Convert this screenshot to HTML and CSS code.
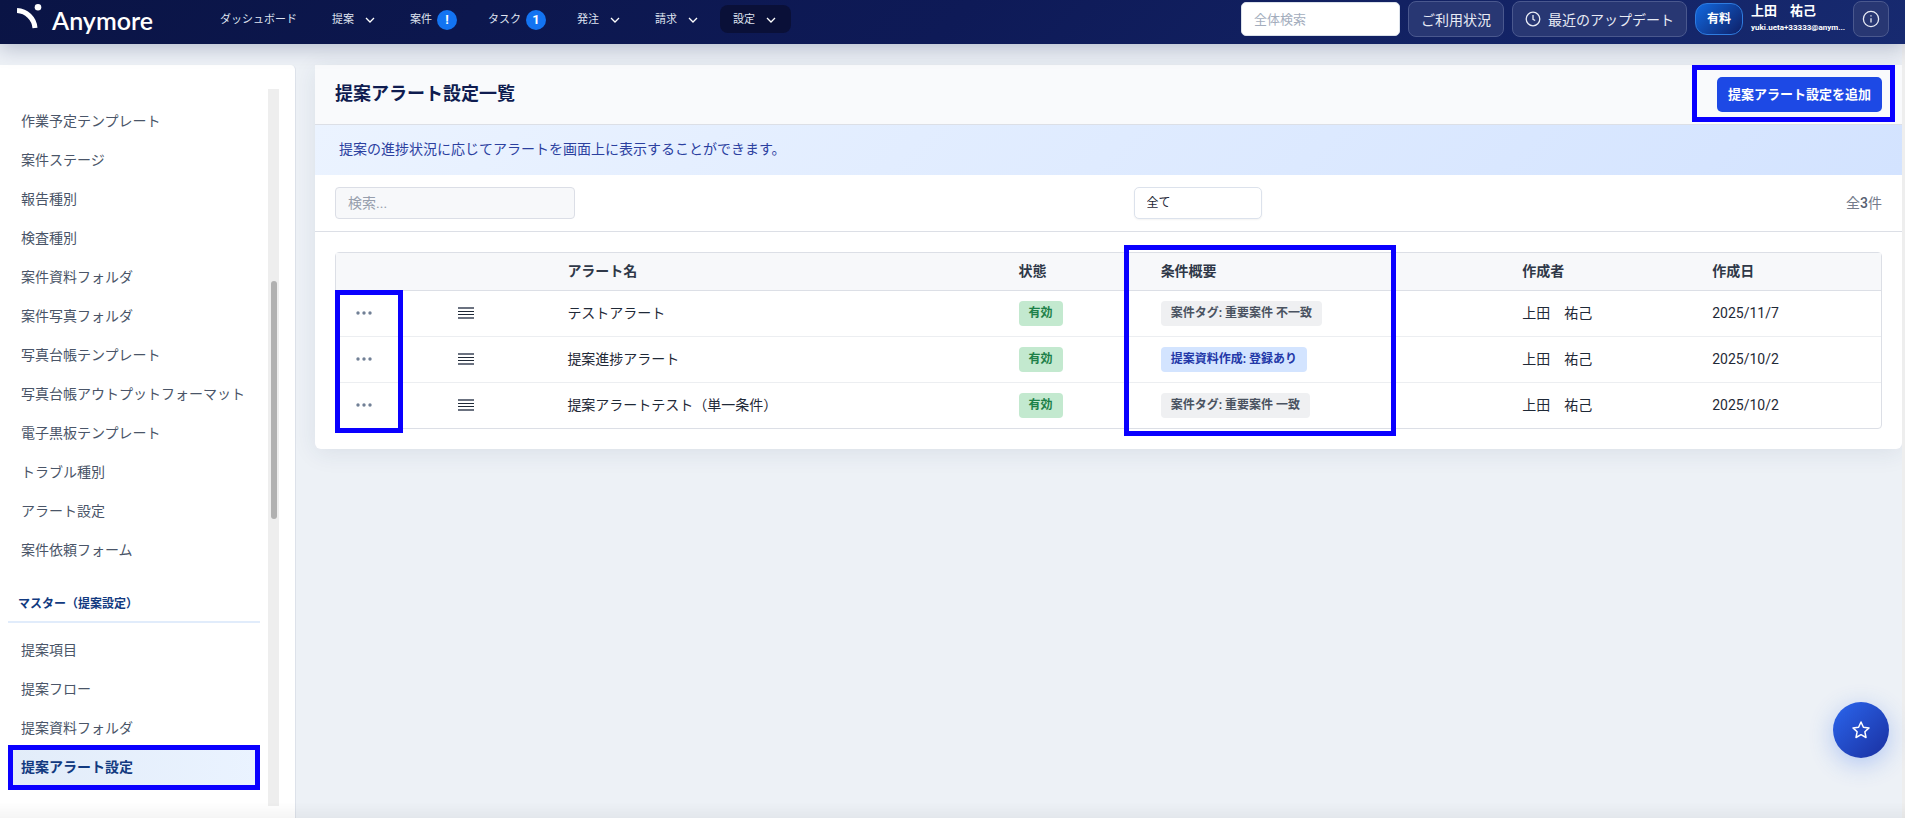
FILE: index.html
```html
<!DOCTYPE html>
<html lang="ja">
<head>
  <meta charset="UTF-8" />
  <meta name="viewport" content="width=device-width, initial-scale=1.0"/>
  <title>提案アラート設定一覧 - Anymore</title>
  <link rel="stylesheet" href="styles.css">
</head>
<body>

  <header class="topbar">
    <a href="#" class="logo">
      <svg width="26" height="26" viewBox="0 0 26 26" aria-hidden="true">
        <path d="M0 6.5A19 19 0 0 1 18 24" fill="none" stroke="#fff" stroke-width="5"/>
        <circle cx="21" cy="3.300" r="3.3" fill="#fff"/>
      </svg>
      <span>Anymore</span>
    </a>

    <nav class="nav">
      <a href="#">ダッシュボード</a>
      <a href="#">提案 <svg class="chevron" viewBox="0 0 10 6"><path d="M1 1l4 4 4-4"/></svg></a>
      <a href="#" class="has-badge">案件 <span class="nav-badge">!</span></a>
      <a href="#" class="has-badge">タスク <span class="nav-badge">1</span></a>
      <a href="#">発注 <svg class="chevron" viewBox="0 0 10 6"><path d="M1 1l4 4 4-4"/></svg></a>
      <a href="#">請求 <svg class="chevron" viewBox="0 0 10 6"><path d="M1 1l4 4 4-4"/></svg></a>
      <a href="#" class="active">設定 <svg class="chevron" viewBox="0 0 10 6"><path d="M1 1l4 4 4-4"/></svg></a>
    </nav>

    <div class="tools">
      <input type="text" class="global-search" placeholder="全体検索" aria-label="全体検索">
      <button class="tool-btn">ご利用状況</button>
      <button class="tool-btn">
        <svg width="16" height="16" viewBox="0 0 16 16" aria-hidden="true">
          <circle cx="8" cy="8" r="6.8"/><path d="M8 4v4.3l2.2 1.2"/>
        </svg>
        最近のアップデート
      </button>
      <span class="plan">有料</span>
      <div class="user">
        <div class="user-name">上田　祐己</div>
        <div class="user-mail">yuki.ueta+33333@anym...</div>
      </div>
      <button class="tool-btn info" aria-label="情報">
        <svg width="18" height="18" viewBox="0 0 18 18" aria-hidden="true">
          <circle cx="9" cy="9" r="7.6"/><path d="M9 8.2v4.4M9 5.2v1.4"/>
        </svg>
      </button>
    </div>
  </header>

  <div class="layout">
    <aside class="sidebar">
      <div class="menu">
        <ul>
          <li><a href="#">作業予定テンプレート</a></li>
          <li><a href="#">案件ステージ</a></li>
          <li><a href="#">報告種別</a></li>
          <li><a href="#">検査種別</a></li>
          <li><a href="#">案件資料フォルダ</a></li>
          <li><a href="#">案件写真フォルダ</a></li>
          <li><a href="#">写真台帳テンプレート</a></li>
          <li><a href="#">写真台帳アウトプットフォーマット</a></li>
          <li><a href="#">電子黒板テンプレート</a></li>
          <li><a href="#">トラブル種別</a></li>
          <li><a href="#">アラート設定</a></li>
          <li><a href="#">案件依頼フォーム</a></li>
        </ul>
        <h2>マスター（提案設定）</h2>
        <ul>
          <li><a href="#">提案項目</a></li>
          <li><a href="#">提案フロー</a></li>
          <li><a href="#">提案資料フォルダ</a></li>
          <li class="current"><a href="#">提案アラート設定</a><span class="mark mark-menu"></span></li>
        </ul>
      </div>
      <div class="scroll-track"><div class="scroll-thumb"></div></div>
    </aside>

    <main class="panel">
      <div class="panel-head">
        <h1>提案アラート設定一覧</h1>
        <div class="add-wrap">
          <button class="add-btn">提案アラート設定を追加</button>
          <span class="mark mark-add"></span>
        </div>
      </div>

      <p class="notice">提案の進捗状況に応じてアラートを画面上に表示することができます。</p>

      <div class="filters">
        <input type="text" class="search" placeholder="検索..." aria-label="検索">
        <select class="status" aria-label="状態">
          <option>全て</option>
        </select>
        <span class="count">全<b>3</b>件</span>
      </div>

      <div class="table-wrap">
        <table>
          <colgroup>
            <col class="col-menu"><col class="col-drag"><col class="col-name"><col class="col-state">
            <col class="col-cond"><col class="col-author"><col class="col-date">
          </colgroup>
          <thead>
            <tr>
              <th></th><th></th><th>アラート名</th><th>状態</th><th>条件概要</th><th>作成者</th><th>作成日</th>
            </tr>
          </thead>
          <tbody>
            <tr>
              <td><button class="more" aria-label="メニュー"><svg width="16" height="4" viewBox="0 0 16 4"><circle cx="2" cy="2" r="1.7"/><circle cx="8" cy="2" r="1.7"/><circle cx="14" cy="2" r="1.7"/></svg></button></td>
              <td><svg class="drag" width="16" height="12" viewBox="0 0 16 12"><path class="outer" d="M0 0h16v2H0zM0 10h16v2H0z"/><path d="M0 4h16v1H0zM0 7h16v1H0z"/></svg></td>
              <td>テストアラート</td>
              <td><span class="tag tag-green">有効</span></td>
              <td><span class="tag">案件タグ: 重要案件 不一致</span></td>
              <td>上田　祐己</td>
              <td>2025/11/7</td>
            </tr>
            <tr>
              <td><button class="more" aria-label="メニュー"><svg width="16" height="4" viewBox="0 0 16 4"><circle cx="2" cy="2" r="1.7"/><circle cx="8" cy="2" r="1.7"/><circle cx="14" cy="2" r="1.7"/></svg></button></td>
              <td><svg class="drag" width="16" height="12" viewBox="0 0 16 12"><path class="outer" d="M0 0h16v2H0zM0 10h16v2H0z"/><path d="M0 4h16v1H0zM0 7h16v1H0z"/></svg></td>
              <td>提案進捗アラート</td>
              <td><span class="tag tag-green">有効</span></td>
              <td><span class="tag tag-blue">提案資料作成: 登録あり</span></td>
              <td>上田　祐己</td>
              <td>2025/10/2</td>
            </tr>
            <tr>
              <td><button class="more" aria-label="メニュー"><svg width="16" height="4" viewBox="0 0 16 4"><circle cx="2" cy="2" r="1.7"/><circle cx="8" cy="2" r="1.7"/><circle cx="14" cy="2" r="1.7"/></svg></button></td>
              <td><svg class="drag" width="16" height="12" viewBox="0 0 16 12"><path class="outer" d="M0 0h16v2H0zM0 10h16v2H0z"/><path d="M0 4h16v1H0zM0 7h16v1H0z"/></svg></td>
              <td>提案アラートテスト（単一条件）</td>
              <td><span class="tag tag-green">有効</span></td>
              <td><span class="tag">案件タグ: 重要案件 一致</span></td>
              <td>上田　祐己</td>
              <td>2025/10/2</td>
            </tr>
          </tbody>
        </table>
        <span class="mark mark-more"></span>
        <span class="mark mark-cond"></span>
      </div>
    </main>
    <div class="page-scroll"></div>
  </div>

  <button class="fab" aria-label="お気に入り">
    <svg width="20" height="20" viewBox="0 0 20 20" aria-hidden="true">
      <path d="M10 2l2.4 5.2 5.6.7-4.1 3.9 1.1 5.7-5-2.8-5 2.8 1.100-5.700L2 7.900l5.600-.7z"/>
    </svg>
  </button>
  <div class="bottom-fade"></div>

</body>
</html>
```
FILE: styles.css
```css
* {
  box-sizing: border-box;
}

body {
  font-family: Roboto, "Noto Sans CJK JP", sans-serif;
  font-size: 14px;
  line-height: 20px;
  margin: 0;
  height: 100vh;
  overflow: hidden;
  display: flex;
  flex-direction: column;
  background: #edf1f6;
  color: #1f2937;
}

a {
  text-decoration: none;
}

button,
input,
select {
  font-family: inherit;
}

button {
  cursor: pointer;
}

/* Header */
.topbar {
  position: relative;
  z-index: 2;
  flex: none;
  height: 44px;
  padding: 0 16px 0 17px;
  display: flex;
  background: linear-gradient(135deg, #0a1445, #0e1a57 50%, #172a70);
  box-shadow: 0 4px 20px rgba(10, 25, 80, 0.25);
}

.logo {
  display: flex;
  gap: 9px;
  padding-top: 4px;
  width: 190px;
  color: white;
  font-family: Lato, sans-serif;
  font-size: 25px;
  font-weight: 600;
  line-height: 32px;
}

.nav {
  display: flex;
  align-items: center;
  gap: 7px;
  height: 28px;
  margin-top: 5px;
}

.nav a {
  display: flex;
  align-items: center;
  gap: 11px;
  height: 28px;
  padding: 2px 15px 0 13px;
  border-radius: 8px;
  color: #dfe3f0;
  font-size: 11px;
}

.nav .active {
  background: #0a1038;
}

.nav .has-badge {
  gap: 5px;
  padding-right: 11px;
}

.chevron {
  width: 10px;
  height: 6px;
  fill: none;
  stroke: white;
  stroke-width: 1.3;
}

.nav-badge {
  width: 20px;
  height: 20px;
  border-radius: 50%;
  background: #1374f2;
  color: white;
  font-size: 13px;
  font-weight: bold;
  text-align: center;
}

.tools {
  display: flex;
  align-items: center;
  gap: 8px;
  height: 36px;
  margin: 1px 0 0 auto;
}

.global-search {
  width: 159px;
  height: 34px;
  padding: 0 12px;
  border: 1px solid #dbe1ea;
  border-radius: 5px;
  background: white;
  font-size: 13px;
}

.global-search::placeholder {
  color: #a3adbd;
}

.tool-btn {
  display: flex;
  align-items: center;
  gap: 7px;
  height: 36px;
  padding: 0 12px;
  border: 1px solid #4a588e;
  border-radius: 8px;
  background: #283773;
  color: #e8ebf5;
  font-size: 14px;
}

.tool-btn svg {
  fill: none;
  stroke: #e8ebf5;
  stroke-width: 1.3;
}

.tool-btn.info {
  padding: 0 8px;
}

.plan {
  height: 32px;
  padding: 0 11px;
  border: 1px solid #2f7ce0;
  border-radius: 12px;
  background: linear-gradient(135deg, #1269e0, #0e1f66);
  color: white;
  font-size: 12px;
  font-weight: bold;
  line-height: 30px;
}

.user {
  width: 94px;
  color: white;
  font-weight: bold;
  white-space: nowrap;
}

.user-name {
  font-size: 13px;
  line-height: 18px;
}

.user-mail {
  font-size: 8px;
  line-height: 16px;
}

/* Layout */
.layout {
  flex: 1;
  min-height: 0;
  display: flex;
}

.sidebar {
  width: 296px;
  margin-top: 21px;
  padding: 24px 16px 12px 8px;
  display: flex;
  justify-content: space-between;
  background: white;
  border-right: 1px solid #dde2ea;
  border-top-right-radius: 5px;
}

.menu {
  width: 252px;
  padding-top: 13px;
}

.menu ul {
  list-style: none;
  margin: 0;
  padding: 0;
}

.menu li {
  position: relative;
}

.menu li a {
  display: block;
  padding: 0 13px;
  color: #4a5568;
  line-height: 39px;
}

.menu .current a {
  background: linear-gradient(90deg, #e2ecf9, #eaf3ff);
  color: #123a80;
  font-weight: bold;
}

.menu h2 {
  margin: 22px 0 8px;
  padding: 0 10px 5px;
  border-bottom: 2px solid #e1ecfb;
  color: #123a80;
  font-size: 12px;
  line-height: 24px;
}

.scroll-track {
  width: 11px;
  padding: 192px 2px 0 3px;
  background: #eeeeee;
}

.scroll-thumb {
  height: 238px;
  border-radius: 3px;
  background: #b1b1b1;
}

.panel {
  flex: 1;
  align-self: flex-start;
  margin: 21px 0 0 19px;
  background: white;
  border-radius: 0 0 6px 6px;
  box-shadow: 0 4px 24px rgba(30, 50, 90, 0.09);
}

.panel-head {
  display: flex;
  justify-content: space-between;
  align-items: center;
  height: 60px;
  padding: 0 20px;
  background: #f9fafc;
  border-bottom: 1px solid #dcdfe6;
}

.panel-head h1 {
  margin: 0 0 2px;
  color: #0f1c50;
  font-size: 18px;
  line-height: 24px;
}

.add-wrap {
  position: relative;
}

.add-btn {
  display: block;
  height: 35px;
  padding: 0 11px 2px;
  border: none;
  border-radius: 5px;
  background: #1d49e5;
  color: white;
  font-size: 13px;
  font-weight: bold;
}

.notice {
  margin: 0;
  padding: 14px 24px 16px;
  background: linear-gradient(135deg, #ebf3ff, #d3e3ff);
  color: #2b409f;
}

.filters {
  display: flex;
  justify-content: space-between;
  align-items: center;
  padding: 12px 20px;
  border-bottom: 1px solid #dcdfe6;
}

.search {
  width: 240px;
  height: 32px;
  padding: 0 12px;
  border: 1px solid #dbdee6;
  border-radius: 4px;
  background: #f7f8fa;
  font-size: 14px;
}

.search::placeholder {
  color: #969eac;
}

.status {
  appearance: none;
  width: 128px;
  height: 32px;
  margin-right: 26px;
  padding: 0 12px;
  border: 1px solid #dce2ec;
  border-radius: 5px;
  background: white;
  box-shadow: 0 1px 2px rgba(0, 0, 0, 0.05);
  color: #1f2937;
  font-size: 12px;
}

.count {
  color: #747b8b;
}

.count b {
  color: #565e70;
  font-weight: 500;
}

/* Table */
.table-wrap {
  position: relative;
  margin: 20px;
  border: 1px solid #dcdfe6;
  border-radius: 4px;
}

table {
  width: 100%;
  table-layout: fixed;
  border-collapse: collapse;
}

.col-menu,
.col-drag {
  width: 7.1%;
}

.col-name {
  width: 29.2%;
}

.col-state {
  width: 9.2%;
}

.col-cond {
  width: 23.4%;
}

.col-author {
  width: 12.3%;
}

th,
td {
  padding: 0 12px;
  text-align: left;
}

th {
  height: 37px;
  background: #f7f8fa;
  border-bottom: 1px solid #dcdfe6;
  color: #2f3848;
}

td {
  height: 46px;
  border-bottom: 1px solid #eceef1;
}

tr:last-child td {
  border-bottom: none;
}

.more {
  display: block;
  padding: 8px;
  border: none;
  background: none;
  fill: #718096;
}

.more svg,
.drag {
  display: block;
}

.drag {
  fill: #1f2937;
}

.drag .outer {
  fill: #6b7280;
}

.tag {
  display: inline-block;
  padding: 0 10px;
  border-radius: 4px;
  background: #eff0f2;
  color: #4a5361;
  font-size: 12px;
  font-weight: bold;
  line-height: 25px;
}

.tag-green {
  background: #c3e9cf;
  color: #1c8048;
}

.tag-blue {
  background: #d3e4ff;
  color: #2338a8;
}

/* Highlight frames */
.mark {
  position: absolute;
  border: 5px solid #0a00ff;
  pointer-events: none;
}

.mark-menu {
  inset: -3px 0;
}

.mark-add {
  inset: -12px -13px -10px -25px;
}

.mark-more {
  top: 37px;
  bottom: -5px;
  left: -1px;
  width: 68px;
}

.mark-cond {
  top: -8px;
  bottom: -8px;
  left: 51%;
  width: 272px;
}

.page-scroll {
  width: 3px;
  background: #eeeeee;
}

.fab {
  position: fixed;
  right: 16px;
  bottom: 60px;
  width: 56px;
  height: 56px;
  padding: 0;
  border: none;
  border-radius: 50%;
  background: linear-gradient(135deg, #2b66ee, #1a2f9f);
  box-shadow: 0 6px 24px rgba(37, 99, 235, 0.3);
}

.fab svg {
  display: block;
  margin: 0 auto;
  fill: none;
  stroke: white;
  stroke-width: 1.5;
  stroke-linejoin: round;
}

.bottom-fade {
  position: fixed;
  left: 0;
  right: 0;
  bottom: 0;
  height: 16px;
  background: linear-gradient(rgba(0, 0, 0, 0), rgba(0, 0, 0, 0.04));
  pointer-events: none;
}
```
